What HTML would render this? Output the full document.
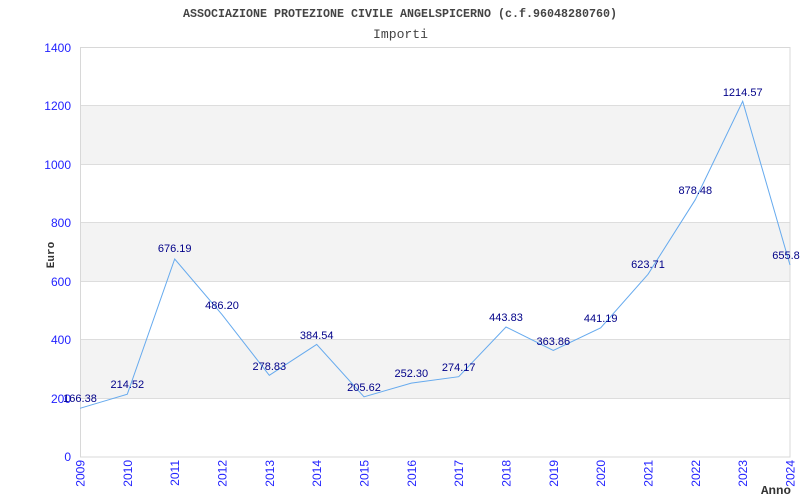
<!DOCTYPE html>
<html><head><meta charset="utf-8"><style>body{margin:0;background:#fff}svg{display:block}</style></head><body>
<svg width="800" height="500" xmlns="http://www.w3.org/2000/svg">
<rect width="800" height="500" fill="#fff"/>
<g fill="#f3f3f3">
<rect x="80" y="105.4" width="710" height="58.6"/>
<rect x="80" y="222.7" width="710" height="58.6"/>
<rect x="80" y="339.9" width="710" height="58.6"/>
</g>
<g stroke="#dddddd" stroke-width="1">
<line x1="80" y1="105.5" x2="790" y2="105.5"/><line x1="80" y1="164.5" x2="790" y2="164.5"/>
<line x1="80" y1="222.5" x2="790" y2="222.5"/><line x1="80" y1="281.5" x2="790" y2="281.5"/>
<line x1="80" y1="339.5" x2="790" y2="339.5"/><line x1="80" y1="398.5" x2="790" y2="398.5"/>
<rect x="80.5" y="47.5" width="709.5" height="409.5" fill="none" stroke="#d8d8d8"/>
</g>
<text x="183" y="17" textLength="434" lengthAdjust="spacingAndGlyphs" font-family="Liberation Mono, monospace" font-weight="bold" font-size="11.5" fill="#444">ASSOCIAZIONE PROTEZIONE CIVILE ANGELSPICERNO (c.f.96048280760)</text>
<text x="373" y="38" textLength="55" lengthAdjust="spacingAndGlyphs" font-family="Liberation Mono, monospace" font-size="13" fill="#444">Importi</text>
<g font-family="Liberation Sans, sans-serif" font-size="12" fill="#2222ff" text-anchor="end">
<text x="71" y="52">1400</text><text x="71" y="110">1200</text><text x="71" y="169">1000</text>
<text x="71" y="227">800</text><text x="71" y="286">600</text><text x="71" y="344">400</text>
<text x="71" y="403">200</text><text x="71" y="461">0</text>
</g>
<text transform="translate(54,255) rotate(-90)" text-anchor="middle" font-family="Liberation Mono, monospace" font-weight="bold" font-size="11" fill="#333">Euro</text>
<g font-family="Liberation Sans, sans-serif" font-size="12" fill="#2222ff" text-anchor="end">
<text transform="translate(84.5,460) rotate(-90)">2009</text>
<text transform="translate(131.8,460) rotate(-90)">2010</text>
<text transform="translate(179.2,460) rotate(-90)">2011</text>
<text transform="translate(226.5,460) rotate(-90)">2012</text>
<text transform="translate(273.8,460) rotate(-90)">2013</text>
<text transform="translate(321.2,460) rotate(-90)">2014</text>
<text transform="translate(368.5,460) rotate(-90)">2015</text>
<text transform="translate(415.8,460) rotate(-90)">2016</text>
<text transform="translate(463.2,460) rotate(-90)">2017</text>
<text transform="translate(510.5,460) rotate(-90)">2018</text>
<text transform="translate(557.8,460) rotate(-90)">2019</text>
<text transform="translate(605.2,460) rotate(-90)">2020</text>
<text transform="translate(652.5,460) rotate(-90)">2021</text>
<text transform="translate(699.8,460) rotate(-90)">2022</text>
<text transform="translate(747.2,460) rotate(-90)">2023</text>
<text transform="translate(794.5,460) rotate(-90)">2024</text>
</g>
<text x="761" y="494" textLength="30" lengthAdjust="spacingAndGlyphs" font-family="Liberation Mono, monospace" font-weight="bold" font-size="12" fill="#333">Anno</text>
<polyline fill="none" stroke="#66aaee" stroke-width="1" points="80,408.3 127.3,394.2 174.7,259 222,314.6 269.3,375.3 316.7,344.4 364,396.8 411.3,383.1 458.7,376.7 506,327 553.3,350.4 600.7,327.8 648,274.3 695.3,199.7 742.7,101.3 790,265"/>
<g font-family="Liberation Sans, sans-serif" font-size="11" fill="#000088" text-anchor="middle">
<text x="80" y="402">166.38</text><text x="127.3" y="388">214.52</text><text x="174.7" y="252">676.19</text>
<text x="222" y="309">486.20</text><text x="269.3" y="370">278.83</text><text x="316.7" y="339">384.54</text>
<text x="364" y="391">205.62</text><text x="411.3" y="377">252.30</text><text x="458.7" y="371">274.17</text>
<text x="506" y="321">443.83</text><text x="553.3" y="345">363.86</text><text x="600.7" y="322">441.19</text>
<text x="648" y="268">623.71</text><text x="695.3" y="194">878.48</text><text x="742.7" y="96">1214.57</text>
<text x="786" y="259">655.8</text>
</g>
</svg>
</body></html>
